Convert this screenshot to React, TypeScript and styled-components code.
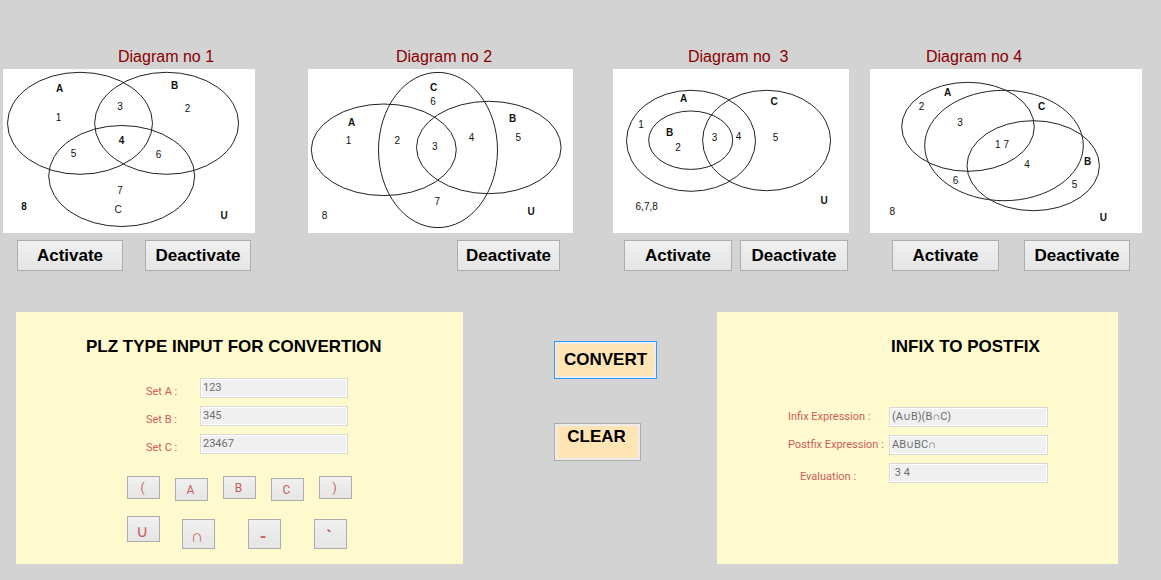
import React, { useState } from "react";
import styled, { createGlobalStyle, css } from "styled-components";

const GlobalStyle = createGlobalStyle`
  *, *::before, *::after { box-sizing: border-box; }
  body {
    margin: 0;
    background: #d3d3d3;
    font-family: "Liberation Sans", Arial, sans-serif;
  }
`;

const formText = css`
  font-family: Roboto, "Liberation Sans", sans-serif;
  font-size: 11px;
`;

const Page = styled.main`
  padding: 47px 0 16px;
`;

const DiagramRow = styled.section`
  display: flex;
  align-items: flex-start;
  padding-left: 3px;
`;

const DiagramCard = styled.article<{ $share: number; $after: number }>`
  flex: ${(p) => p.$share} 1 0;
  min-width: 0;
  margin-right: ${(p) => p.$after}px;
`;

const DiagramTitle = styled.h2<{ $indent: number }>`
  margin: 0 0 2px;
  padding-left: ${(p) => p.$indent}px;
  font-size: 16px;
  font-weight: 400;
  line-height: 20px;
  color: #8b0000;
  white-space: pre;
`;

const Drawing = styled.svg`
  display: block;
  width: 100%;
  height: auto;
  background: #fff;
  font-family: "Liberation Sans", Arial, sans-serif;
  font-size: 10px;

  ellipse {
    fill: none;
    stroke: #222;
    stroke-width: 1;
  }
  text {
    fill: #111;
    text-anchor: middle;
  }
`;

const ButtonRow = styled.div<{ $gap: number; $end: number }>`
  display: flex;
  justify-content: flex-end;
  gap: ${(p) => p.$gap}px;
  padding: 7px ${(p) => p.$end}px 0 0;
`;

const Button = styled.button<{ $width: number }>`
  width: ${(p) => p.$width}px;
  height: 31px;
  padding: 0;
  border: 1px solid #adadad;
  border-radius: 0;
  background: linear-gradient(#f0f0f0, #e5e5e5);
  color: #000;
  font: bold 17px/20px "Liberation Sans", Arial, sans-serif;
  white-space: nowrap;
`;

const WorkRow = styled.section`
  display: grid;
  grid-template-columns: minmax(0, 447fr) minmax(0, 254fr) minmax(0, 401fr);
  margin-top: 41px;
  padding: 0 43px 0 16px;
`;

const Panel = styled.form`
  min-height: 252px;
  padding: 25px 0 15px;
  background: #fffacd;
`;

const PanelTitle = styled.h2<{ $indent: number }>`
  margin: 0;
  padding-left: ${(p) => p.$indent}px;
  font-size: 17px;
  line-height: 20px;
  color: #000;
  white-space: nowrap;
`;

const Fields = styled.div<{ $top: number; $indent: number }>`
  display: flex;
  flex-direction: column;
  gap: 8px;
  padding: ${(p) => p.$top}px 0 0 ${(p) => p.$indent}px;
`;

const Field = styled.div`
  display: flex;
  height: 20px;
`;

const Label = styled.label<{ $width: number; $indent?: number; $low?: boolean }>`
  ${formText}
  flex: none;
  width: ${(p) => p.$width}px;
  padding-left: ${(p) => p.$indent ?? 0}px;
  padding-top: ${(p) => (p.$low ? 6 : 2)}px;
  line-height: 16px;
  color: #cd5c5c;
  white-space: nowrap;
`;

const TextBox = styled.input<{ $width: number }>`
  ${formText}
  width: ${(p) => p.$width}px;
  height: 20px;
  padding: 0 2px 1px;
  border: 1px solid #d9d9d9;
  border-radius: 0;
  box-shadow: inset 0 0 0 1px #fff;
  background: #f0f0f0;
  color: #6d6d6d;
`;

const KeyRow = styled.div<{ $gap: number; $top: number; $height: number }>`
  display: flex;
  gap: ${(p) => p.$gap}px;
  height: ${(p) => p.$height}px;
  margin: ${(p) => p.$top}px 0 0 111px;
`;

const Key = styled.button<{ $height: number; $low?: boolean; $large?: boolean; $bold?: boolean }>`
  ${formText}
  align-self: ${(p) => (p.$low ? "flex-end" : "flex-start")};
  width: 33px;
  height: ${(p) => p.$height}px;
  padding: ${(p) => (p.$large ? "4px 3px 0 0" : "0 2px 0 0")};
  border: 1px solid #adadad;
  border-radius: 0;
  background: linear-gradient(#f0f0f0, #e5e5e5);
  color: #cd5c5c;
  font-size: ${(p) => (p.$large ? 17 : 12)}px;
  font-weight: ${(p) => (p.$bold ? 700 : 400)};
  line-height: 16px;
`;

const FirstPair = styled.div`
  display: flex;
  gap: 22px;
`;

const Actions = styled.div`
  display: flex;
  flex-direction: column;
  align-items: flex-start;
  gap: 44px;
  padding: 29px 0 0 91px;
`;

const ActionButton = styled.button<{ $width: number; $focused?: boolean; $raised?: boolean }>`
  width: ${(p) => p.$width}px;
  height: 38px;
  padding: ${(p) => (p.$raised ? "0 2px 10px 0" : "0")};
  border: 1px solid ${(p) => (p.$focused ? "#3399ff" : "#adadad")};
  border-radius: 0;
  box-shadow: inset 0 0 0 2px #ececec;
  background: #ffe4b5;
  color: #000;
  font: bold 17px/20px "Liberation Sans", Arial, sans-serif;
`;

type Ellipse = [cx: number, cy: number, rx: number, ry: number];
type Mark = [text: string, x: number, y: number, bold?: boolean];

interface Diagram {
  title: string;
  indent: number;
  width: number;
  after: number;
  ellipses: Ellipse[];
  marks: Mark[];
  buttons: { text: string; width: number }[];
  gap: number;
  end: number;
}

const diagrams: Diagram[] = [
  {
    title: "Diagram no 1",
    indent: 115,
    width: 252,
    after: 53,
    ellipses: [[77, 54.3, 72.5, 51], [163.6, 54.3, 72, 51], [118.7, 107, 73, 50.5]],
    marks: [
      ["A", 56.5, 22.5, true], ["B", 171.5, 20, true], ["1", 55.5, 51.5], ["3", 117, 41],
      ["2", 184.5, 43], ["4", 118.5, 74.5, true], ["5", 70.5, 87.5], ["6", 155.5, 88.5],
      ["7", 117, 125], ["C", 115, 144], ["8", 21, 141, true], ["U", 221, 150, true],
    ],
    buttons: [{ text: "Activate", width: 106 }, { text: "Deactivate", width: 106 }],
    gap: 22,
    end: 4,
  },
  {
    title: "Diagram no 2",
    indent: 88,
    width: 265,
    after: 40,
    ellipses: [[75.8, 80.8, 72.5, 45.8], [180.8, 78.5, 72.3, 46.2], [130, 81, 59.5, 77.6]],
    marks: [
      ["C", 125.7, 22, true], ["6", 125, 35.5], ["A", 43.5, 56.5, true], ["1", 40.5, 75],
      ["2", 89.3, 74.5], ["3", 126.7, 81], ["4", 163.5, 71.5], ["5", 210.3, 71.5],
      ["B", 204.5, 52.5, true], ["7", 129.3, 136], ["8", 16.5, 150], ["U", 223, 146, true],
    ],
    buttons: [{ text: "Deactivate", width: 103 }],
    gap: 0,
    end: 13,
  },
  {
    title: "Diagram no  3",
    indent: 75,
    width: 236,
    after: 21,
    ellipses: [[78, 71.8, 64.5, 50.5], [77.7, 71.2, 42, 29.2], [153.6, 71.5, 64, 50.2]],
    marks: [
      ["A", 70.5, 32.5, true], ["C", 161, 36, true], ["1", 28, 58.5], ["B", 56.5, 66.5, true],
      ["2", 65, 81.5], ["3", 101.5, 72], ["4", 125.5, 71], ["5", 162.5, 71.5],
      ["6,7,8", 33.7, 141], ["U", 211, 135, true],
    ],
    buttons: [{ text: "Activate", width: 108 }, { text: "Deactivate", width: 108 }],
    gap: 8,
    end: 1,
  },
  {
    title: "Diagram no 4",
    indent: 56,
    width: 272,
    after: 19,
    ellipses: [[98, 57.8, 66.3, 44.5], [134, 76.5, 79.3, 55.2], [163.2, 96.7, 66.2, 45]],
    marks: [
      ["A", 77.5, 26.5, true], ["2", 51.5, 40.5], ["3", 90, 56.5], ["C", 171.5, 41, true],
      ["1 7", 132, 78.5], ["4", 157, 98.5], ["B", 217.7, 96, true], ["6", 85.5, 114.5],
      ["5", 204.5, 118.5], ["8", 22.3, 146], ["U", 233.3, 152, true],
    ],
    buttons: [{ text: "Activate", width: 107 }, { text: "Deactivate", width: 106 }],
    gap: 25,
    end: 12,
  },
];

function VennDiagram({ diagram }: { diagram: Diagram }) {
  return (
    <DiagramCard $share={diagram.width} $after={diagram.after}>
      <DiagramTitle $indent={diagram.indent}>{diagram.title}</DiagramTitle>
      <Drawing viewBox={`0 0 ${diagram.width} 164`} role="img" aria-label={diagram.title}>
        {diagram.ellipses.map(([cx, cy, rx, ry], i) => (
          <ellipse key={i} cx={cx} cy={cy} rx={rx} ry={ry} />
        ))}
        {diagram.marks.map(([text, x, y, bold]) => (
          <text key={text} x={x} y={y} fontWeight={bold ? 700 : 400}>
            {text}
          </text>
        ))}
      </Drawing>
      <ButtonRow $gap={diagram.gap} $end={diagram.end}>
        {diagram.buttons.map((b) => (
          <Button key={b.text} type="button" $width={b.width}>
            {b.text}
          </Button>
        ))}
      </ButtonRow>
    </DiagramCard>
  );
}

const setFields = [
  { id: "set-a", label: "Set A :", value: "123" },
  { id: "set-b", label: "Set B :", value: "345" },
  { id: "set-c", label: "Set C :", value: "23467" },
];

const resultFields = [
  { id: "infix", label: "Infix Expression :", value: "(A∪B)(B∩C)" },
  { id: "postfix", label: "Postfix Expression :", value: "AB∪BC∩" },
  { id: "evaluation", label: "Evaluation :", value: " 3 4", indent: 12, low: true },
];

export default function App() {
  const [values, setValues] = useState<Record<string, string>>(
    Object.fromEntries([...setFields, ...resultFields].map((f) => [f.id, f.value]))
  );
  const bind = (id: string) => ({
    id,
    value: values[id],
    onChange: (e: React.ChangeEvent<HTMLInputElement>) =>
      setValues({ ...values, [id]: e.target.value }),
  });

  return (
    <Page>
      <GlobalStyle />
      <DiagramRow>
        {diagrams.map((d) => (
          <VennDiagram key={d.title} diagram={d} />
        ))}
      </DiagramRow>
      <WorkRow>
        <Panel>
          <PanelTitle $indent={70}>PLZ TYPE INPUT FOR CONVERTION</PanelTitle>
          <Fields $top={21} $indent={130}>
            {setFields.map((f) => (
              <Field key={f.id}>
                <Label htmlFor={f.id} $width={54} $low>
                  {f.label}
                </Label>
                <TextBox type="text" $width={148} {...bind(f.id)} />
              </Field>
            ))}
          </Fields>
          <KeyRow $gap={15} $top={22} $height={25}>
            {["(", "A", "B", "C", ")"].map((k) => (
              <Key key={k} type="button" $height={23} $low={k === "A" || k === "C"}>
                {k}
              </Key>
            ))}
          </KeyRow>
          <KeyRow $gap={33} $top={15} $height={33}>
            <FirstPair>
              <Key type="button" $height={26} $large>∪</Key>
              <Key type="button" $height={30} $large $low>∩</Key>
            </FirstPair>
            <Key type="button" $height={30} $large $low $bold>-</Key>
            <Key type="button" $height={30} $large $low $bold>`</Key>
          </KeyRow>
        </Panel>
        <Actions>
          <ActionButton type="button" $width={103} $focused>CONVERT</ActionButton>
          <ActionButton type="button" $width={87} $raised>CLEAR</ActionButton>
        </Actions>
        <Panel>
          <PanelTitle $indent={174}>INFIX TO POSTFIX</PanelTitle>
          <Fields $top={50} $indent={71}>
            {resultFields.map((f) => (
              <Field key={f.id}>
                <Label htmlFor={f.id} $width={101} $indent={f.indent} $low={f.low}>
                  {f.label}
                </Label>
                <TextBox type="text" $width={159} {...bind(f.id)} />
              </Field>
            ))}
          </Fields>
        </Panel>
      </WorkRow>
    </Page>
  );
}
